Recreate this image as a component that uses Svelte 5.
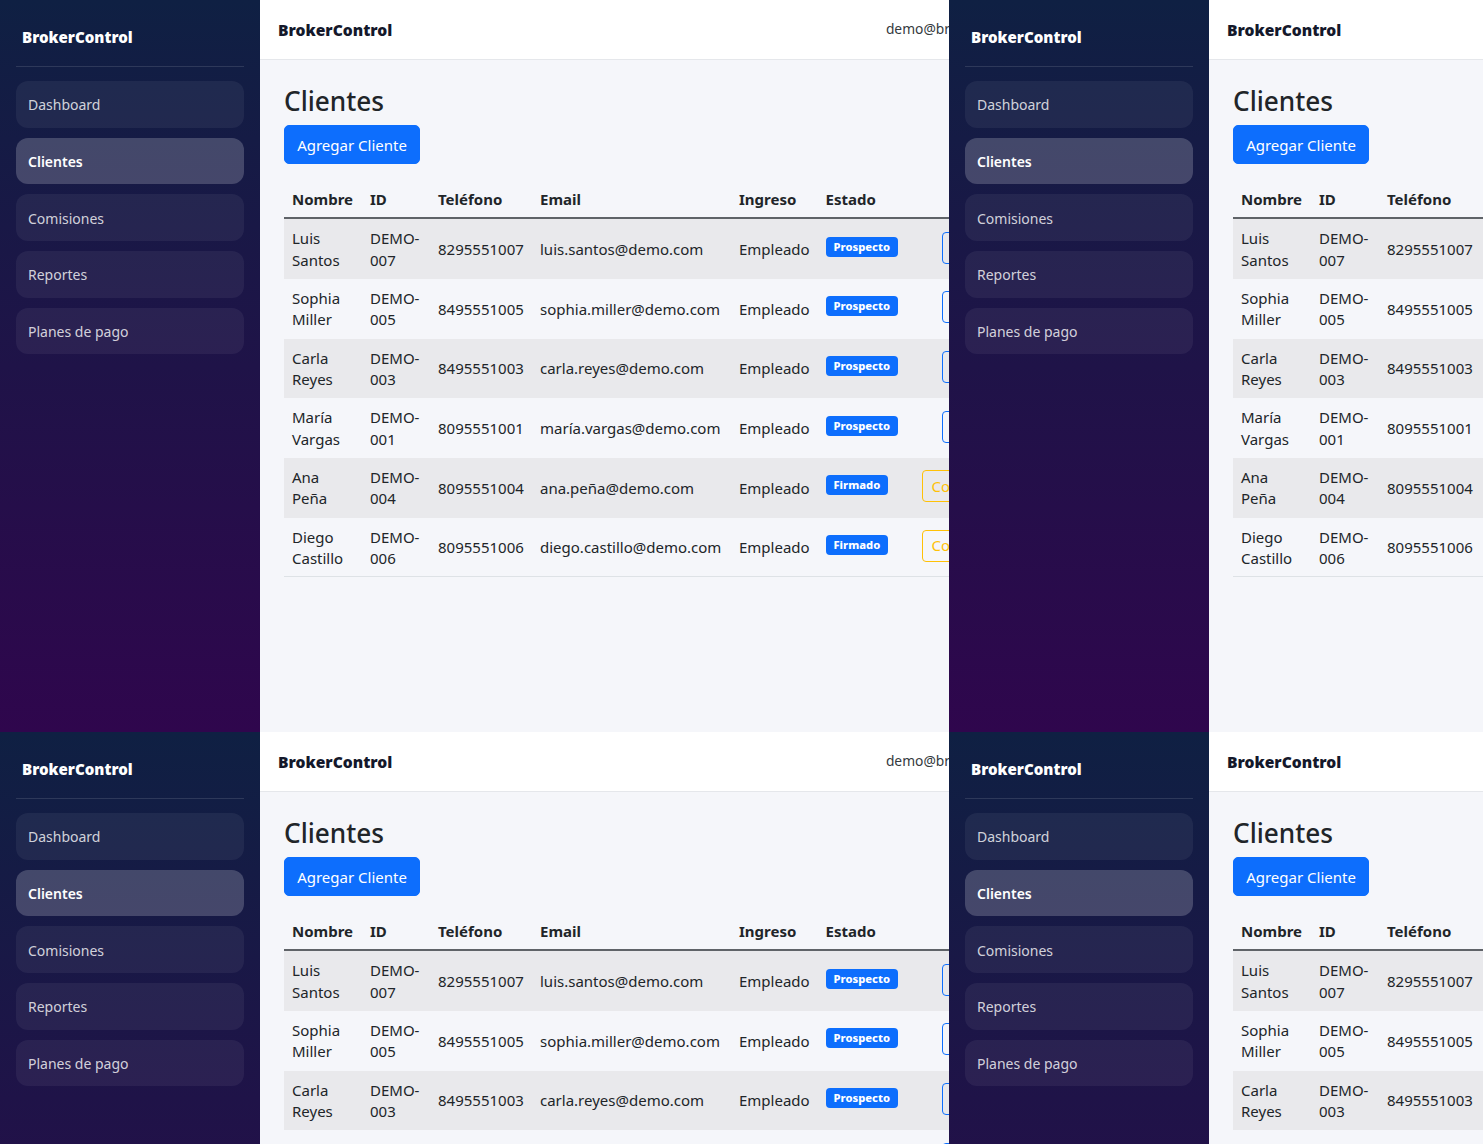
<script>
  const panels = [1, 2, 3, 4];
  const nav = ['Dashboard', 'Clientes', 'Comisiones', 'Reportes', 'Planes de pago'];
  const clients = [
    ['Luis Santos', 'DEMO-007', '8295551007', 'luis.santos@demo.com', 'Prospecto', 'Convertir'],
    ['Sophia Miller', 'DEMO-005', '8495551005', 'sophia.miller@demo.com', 'Prospecto', 'Convertir'],
    ['Carla Reyes', 'DEMO-003', '8495551003', 'carla.reyes@demo.com', 'Prospecto', 'Convertir'],
    ['María Vargas', 'DEMO-001', '8095551001', 'maría.vargas@demo.com', 'Prospecto', 'Convertir'],
    ['Ana Peña', 'DEMO-004', '8095551004', 'ana.peña@demo.com', 'Firmado', 'Comisiones'],
    ['Diego Castillo', 'DEMO-006', '8095551006', 'diego.castillo@demo.com', 'Firmado', 'Comisiones']
  ];
</script>

<div class="grid">
  {#each panels as p (p)}
    <section class="panel">
      <div class="page">
        <aside class="sidebar">
          <div class="brand">BrokerControl</div>
          <nav class="nav">
            {#each nav as item}
              <a class="link" class:active={item === 'Clientes'} href="#top">{item}</a>
            {/each}
          </nav>
        </aside>
        <div class="main">
          <header class="topbar">
            <span class="logo">BrokerControl</span>
            <span class="user">demo@brokercontrol.com</span>
          </header>
          <main class="content">
            <h1>Clientes</h1>
            <button class="add">Agregar Cliente</button>
            <table>
              <colgroup>
                <col class="c1" /><col class="c2" /><col class="c3" /><col class="c4" /><col class="c5" /><col class="c6" /><col />
              </colgroup>
              <thead>
                <tr><th>Nombre</th><th>ID</th><th>Teléfono</th><th>Email</th><th>Ingreso</th><th>Estado</th><th></th></tr>
              </thead>
              <tbody>
                {#each clients as c}
                  <tr>
                    <td>{c[0]}</td>
                    <td>{c[1]}</td>
                    <td>{c[2]}</td>
                    <td>{c[3]}</td>
                    <td>Empleado</td>
                    <td><span class="badge">{c[4]}</span></td>
                    <td class="actions">
                      <button class="act" class:warn={c[4] === 'Firmado'}>{c[5]}</button>
                    </td>
                  </tr>
                {/each}
              </tbody>
            </table>
          </main>
        </div>
      </div>
    </section>
  {/each}
</div>

<style>
  :global(body) {
    margin: 0;
    background: #f5f6fa;
    font-family: "Noto Sans", "Open Sans", sans-serif;
    font-size: 15px;
    color: #212529;
  }
  .grid {
    display: grid;
    grid-template-columns: 949px 534px;
    grid-template-rows: 732px 412px;
    width: 1483px;
    height: 1144px;
    overflow: hidden;
  }
  .panel {
    overflow: hidden;
  }
  .page {
    display: flex;
    width: 1074px;
    height: 732px;
  }
  .sidebar {
    flex: none;
    box-sizing: border-box;
    width: 260px;
    height: 732px;
    padding: 0 16px;
    background: linear-gradient(180deg, #0f2043 0%, #2f064d 100%);
  }
  .brand {
    box-sizing: border-box;
    height: 67px;
    padding: 26px 6px 0;
    border-bottom: 1px solid rgba(255, 255, 255, 0.12);
    margin-bottom: 14px;
    color: #fff;
    font-size: 15.1px;
    line-height: 22px;
    font-weight: 900;
  }
  .nav {
    display: flex;
    flex-direction: column;
    gap: 10px;
  }
  .link {
    box-sizing: border-box;
    display: flex;
    align-items: center;
    height: 46.67px;
    padding: 1px 12px 0;
    border-radius: 12px;
    background: rgba(255, 255, 255, 0.06);
    color: rgba(255, 255, 255, 0.8);
    font-size: 14px;
    text-decoration: none;
  }
  .link.active {
    background: rgba(255, 255, 255, 0.2);
    color: #fff;
    font-weight: 600;
  }
  .main {
    flex: 1;
    min-width: 0;
    background: #f5f6fa;
  }
  .topbar {
    box-sizing: border-box;
    display: flex;
    justify-content: space-between;
    align-items: center;
    height: 60px;
    padding: 0 18px;
    background: #fff;
    border-bottom: 1px solid #e5e7eb;
  }
  .logo {
    color: #14182b;
    font-size: 15.6px;
    font-weight: 900;
  }
  .user {
    padding-bottom: 2px;
    font-size: 13.8px;
    color: #343a40;
  }
  .content {
    padding: 24px;
  }
  h1 {
    margin: 0;
    height: 41px;
    font-size: 26.2px;
    line-height: 35px;
    font-weight: 500;
    color: #212529;
  }
  .add {
    box-sizing: border-box;
    display: block;
    width: 136px;
    height: 39px;
    padding: 0;
    margin-bottom: 16px;
    border: 1px solid #0d6efd;
    border-radius: 5px;
    background: #0d6efd;
    color: #fff;
    font: inherit;
  }
  table {
    width: 747px;
    table-layout: fixed;
    border-collapse: collapse;
    line-height: 21.33px;
  }
  .c1 { width: 78px; }
  .c2 { width: 68px; }
  .c3 { width: 102px; }
  .c4 { width: 199px; }
  .c5 { width: 86.5px; }
  .c6 { width: 88px; }
  th {
    box-sizing: border-box;
    height: 38px;
    padding: 9px 8px 7px;
    text-align: left;
    font-weight: 700;
    white-space: nowrap;
    border-bottom: 2px solid #5f6368;
  }
  td {
    height: 59.67px;
    box-sizing: border-box;
    padding: 9px 8px 7px;
    vertical-align: middle;
    border-bottom: 1px solid #dee2e6;
    color: #212529;
  }
  tbody tr:nth-child(odd) td {
    background: #e9e9ec;
    border-bottom-color: #e9e9ec;
  }
  tbody tr:nth-child(even) td {
    border-bottom-color: #f5f6fa;
  }
  tbody tr:last-child td {
    border-bottom-color: #dee2e6;
  }
  .badge {
    display: inline-block;
    position: relative;
    top: -4px;
    padding: 0 8px;
    border-radius: 4px;
    background: #0d6efd;
    color: #fff;
    font-size: 11.2px;
    line-height: 20px;
    font-weight: 800;
    white-space: nowrap;
  }
  .actions {
    text-align: right;
  }
  .act {
    box-sizing: border-box;
    height: 32px;
    padding: 0 6.5px;
    border: 1px solid #0d6efd;
    border-radius: 4px;
    background: transparent;
    color: #0d6efd;
    font: inherit;
    white-space: nowrap;
    position: relative;
    top: -2px;
  }
  .act.warn {
    padding: 0 9px;
    border-color: #ffc107;
    color: #ffc107;
  }
</style>
